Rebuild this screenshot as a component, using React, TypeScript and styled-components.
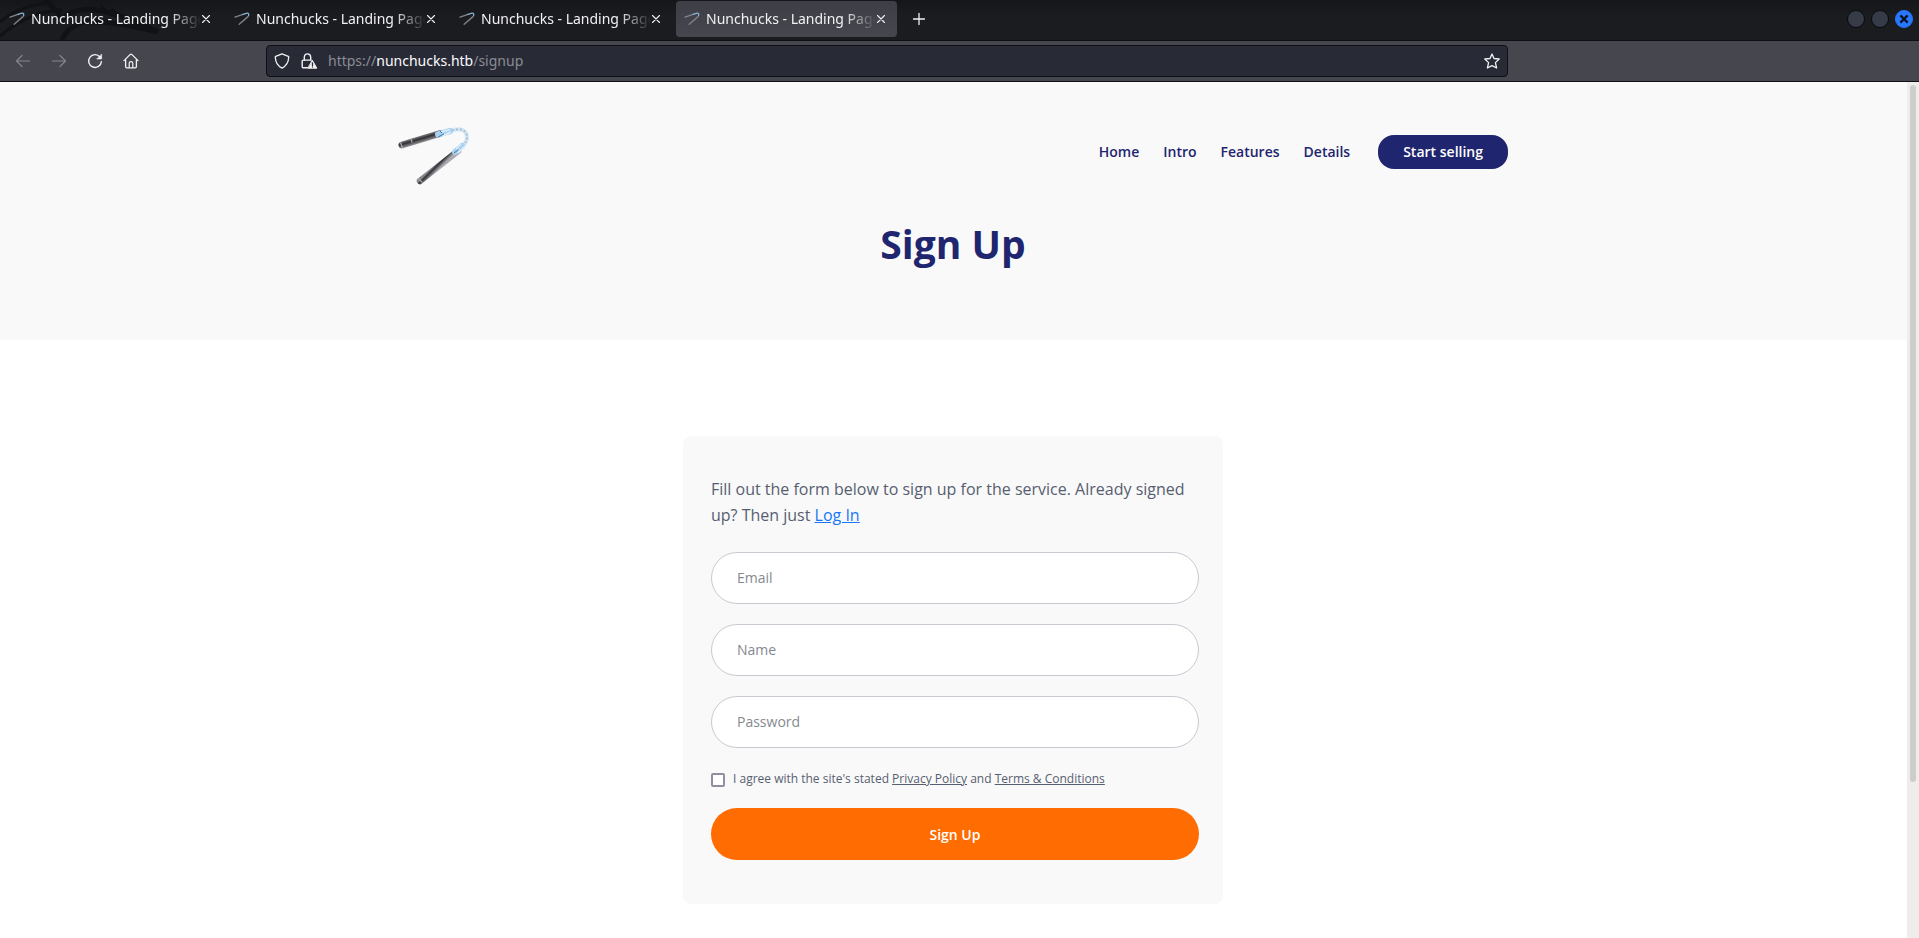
import React from "react";
import styled, { createGlobalStyle, css } from "styled-components";

const GlobalStyle = createGlobalStyle`
  *, *::before, *::after { box-sizing: border-box; }
  body { margin: 0; background: #fff; }
  button, input { font: inherit; }
`;

const openSans = `"Open Sans", "Noto Sans", sans-serif`;
const navy = "#1f256e";
const slate = "#575e70";

const BrowserWindow = styled.div`
  display: flex;
  flex-direction: column;
  min-height: 100vh;
`;

/* Browser chrome */

const TabBar = styled.div`
  position: relative;
  display: flex;
  align-items: flex-start;
  height: 41px;
  padding: 1px 6px 0 1px;
  border-bottom: 1px solid #0e0f13;
  background: linear-gradient(#15161a, #1b1c20 16px);
  font-family: "Noto Sans", sans-serif;
`;

const Watermark = styled.svg`
  position: absolute;
  left: 0;
  top: 0;
`;

const Tab = styled.div<{ $active?: boolean }>`
  position: relative;
  display: flex;
  align-items: center;
  width: 221px;
  height: 36px;
  margin-right: 4px;
  padding: 0 11px 0 8px;
  border-radius: 4px;
  color: #f1f1f3;
  ${(p) =>
    p.$active &&
    css`
      background: linear-gradient(#3e3e46, #46464f);
    `}
`;

const TabTitle = styled.span`
  flex: 1;
  margin-left: 6px;
  overflow: hidden;
  white-space: nowrap;
  font-size: 14px;
  line-height: 24px;
  mask-image: linear-gradient(to left, transparent, #000 32px);
`;

const IconButton = styled.button<{ $dim?: boolean }>`
  display: flex;
  align-items: center;
  justify-content: center;
  flex: none;
  padding: 0;
  border: 0;
  background: none;
  color: ${(p) => (p.$dim ? "#85858b" : "#f1f1f3")};
`;

const NewTab = styled(IconButton)`
  width: 36px;
  height: 36px;
`;

const WindowControls = styled.div`
  display: flex;
  gap: 6px;
  margin: 9px 0 0 auto;
`;

const WindowButton = styled.button<{ $close?: boolean }>`
  display: flex;
  align-items: center;
  justify-content: center;
  width: 18px;
  height: 18px;
  padding: 0;
  border: 1px solid ${(p) => (p.$close ? "#2777ff" : "#08090c")};
  border-radius: 50%;
  background: ${(p) => (p.$close ? "#2777ff" : "#363b48")};
`;

const Toolbar = styled.div`
  display: grid;
  grid-template-columns: 266px 1fr 411px;
  align-items: center;
  height: 41px;
  border-bottom: 1px solid #0f1014;
  background: #46464f;
`;

const ToolbarButtons = styled.div`
  display: flex;
  gap: 16px;
  padding-left: 13px;
`;

const ToolbarButton = styled(IconButton)`
  width: 20px;
  height: 20px;
`;

const AddressBar = styled.div`
  display: flex;
  align-items: center;
  height: 32px;
  padding: 0 7px;
  border: 1px solid #0e0f14;
  border-radius: 4px;
  background: #282a36;
  color: #f1f1f3;
  font: 14px/24px "Noto Sans", sans-serif;
`;

const Shield = styled(IconButton)`
  margin-right: 11px;
`;

const Address = styled.span`
  flex: 1;
  margin-left: 10px;
  color: #8b8c93;
`;

const Host = styled.span`
  color: #fbfbfe;
`;

/* Page */

const Viewport = styled.div`
  display: grid;
  grid-template-columns: 1fr 12px;
  flex: 1;
`;

const ScrollTrack = styled.div`
  padding: 3px;
  background: #eeedec;
`;

const ScrollThumb = styled.div`
  height: 82%;
  border-radius: 3px;
  background: #cdcdcd;
`;

const Page = styled.div`
  font-family: ${openSans};
`;

const Header = styled.header`
  height: 258px;
  padding-right: 1px;
  background: #f9f9f9;
`;

const Container = styled.div`
  display: flex;
  align-items: center;
  justify-content: space-between;
  max-width: 1140px;
  margin: 0 auto;
  padding: 37px 15px 0;
`;

const Nav = styled.nav`
  display: flex;
  align-items: center;
  gap: 24px;
  font-size: 14px;
  font-weight: 600;
  line-height: 20px;
`;

const NavLink = styled.a`
  color: ${navy};
  text-decoration: none;
`;

const NavButton = styled(NavLink)`
  margin-left: 4px;
  padding: 7px 25px;
  border-radius: 16px;
  background: ${navy};
  color: #fff;
`;

const Title = styled.h1`
  margin: 31px 0 0;
  color: ${navy};
  font-size: 39px;
  font-weight: 700;
  line-height: 56px;
  text-align: center;
`;

const Main = styled.main`
  padding: 96px 1px 32px 0;
`;

const Card = styled.form`
  max-width: 540px;
  margin: 0 auto;
  padding: 40px 24px 44px 28px;
  border-radius: 8px;
  background: #f9f9f9;
`;

const Intro = styled.p`
  margin: 0 0 24px;
  color: ${slate};
  font-size: 16px;
  line-height: 26px;
`;

const LoginLink = styled.a`
  color: #1877f9;
`;

const Field = styled.input`
  display: block;
  width: 100%;
  height: 52px;
  margin-bottom: 20px;
  padding: 0 25px 2px;
  border: 1px solid #c8cad1;
  border-radius: 26px;
  background: #fff;
  font-size: 14px;
  color: ${slate};
  &::placeholder {
    color: #85898f;
    opacity: 1;
  }
`;

const Agreement = styled.label`
  display: flex;
  align-items: center;
  gap: 8px;
  margin-bottom: 18px;
  color: ${slate};
  font-size: 12px;
  line-height: 22px;
`;

const Checkbox = styled.input`
  appearance: none;
  flex: none;
  width: 14px;
  height: 14px;
  margin: 2px 0 0;
  border: 2px solid #8f8f9d;
  border-radius: 2px;
  background: #fff;
`;

const PolicyLink = styled.a`
  color: inherit;
`;

const Submit = styled.button`
  display: block;
  width: 100%;
  height: 52px;
  border: 0;
  border-radius: 26px;
  background: #ff6c02;
  color: #fff;
  font-size: 14px;
  font-weight: 600;
`;

const stroke = {
  fill: "none",
  stroke: "currentColor",
  strokeLinecap: "round" as const,
  strokeLinejoin: "round" as const,
};

const Favicon = () => (
  <svg width="16" height="16" viewBox="0 0 16 16" fill="none" strokeLinecap="round">
    <path d="M1 6.2 9 3.4" stroke="#82858b" strokeWidth="1.3" />
    <path d="M9 3.4 13 2.2Q15.2 2 14.6 4.6" stroke="#86b4d4" strokeWidth="1.3" />
    <path d="M14 5.6 5.2 13.2" stroke="#7b7e85" strokeWidth="1.5" />
  </svg>
);

const Close = () => (
  <svg width="10" height="10" viewBox="0 0 10 10" {...stroke}>
    <path d="M1.5 1.5 8.5 8.5M8.5 1.5 1.5 8.5" strokeWidth="1.1" />
  </svg>
);

const Logo = () => (
  <svg width="72" height="66" viewBox="0 -6 72 66" fill="none" role="img" aria-label="Nunchucks">
    <defs>
      <linearGradient id="upper" x1="20" y1="8" x2="23" y2="18" gradientUnits="userSpaceOnUse">
        <stop offset="0" stopColor="#c3c3c6" />
        <stop offset="0.35" stopColor="#77767a" />
        <stop offset="0.6" stopColor="#302f33" />
        <stop offset="1" stopColor="#9c9ca1" />
      </linearGradient>
      <linearGradient id="lower" x1="35" y1="36" x2="42" y2="43" gradientUnits="userSpaceOnUse">
        <stop offset="0" stopColor="#5b5b60" />
        <stop offset="0.4" stopColor="#8f8f94" />
        <stop offset="0.6" stopColor="#2f2e33" />
        <stop offset="1" stopColor="#aaaab0" />
      </linearGradient>
    </defs>
    <path d="M54 5.5Q64 2 68 8Q71 14 65 21" stroke="#d4e6f3" strokeWidth="4" />
    <path d="M54 5.5Q64 2 68 8Q71 14 65 21" stroke="#a9c3d6" strokeWidth="2" strokeDasharray="2 2" />
    <path d="M4 20 42 8.5" stroke="url(#upper)" strokeWidth="7" strokeLinecap="round" />
    <path d="M40 9.5 52 6" stroke="#a9d0ee" strokeWidth="6" strokeLinecap="round" />
    <path d="M43 7 52 4.5M44 11 53 7" stroke="#e0f1fc" strokeWidth="1.5" />
    <path d="M40 12 46 9M42 6 44 8" stroke="#3d78a8" strokeWidth="1" />
    <path d="M2.5 17.5 4.5 23M13 13.5 14 17.5" stroke="#a9a9ad" strokeWidth="1.2" />
    <path d="M22 56 60 26" stroke="url(#lower)" strokeWidth="6.5" strokeLinecap="round" />
    <path d="M57 27 64 21" stroke="#a9d0ee" strokeWidth="6" strokeLinecap="round" />
    <path d="M58 24 63 19M60 28 67 21" stroke="#e0f1fc" strokeWidth="1.5" />
    <path d="M56 28 60 25" stroke="#3d78a8" strokeWidth="1" />
    <path d="M20 53.5 24.5 57.5" stroke="#a9a9ad" strokeWidth="1.2" />
  </svg>
);

const tabs = [1, 2, 3, 4];

export default function App() {
  return (
    <BrowserWindow>
      <GlobalStyle />
      <TabBar>
        <Watermark width="170" height="40" viewBox="0 0 170 40" fill="none" stroke="#111216">
          <path d="M0 22Q22 4 52 3M0 36Q28 12 62 10" strokeWidth="3" />
          <path d="M44 0Q56 8 62 20Q70 10 88 9Q120 12 158 32Q110 20 84 22Q66 28 62 40" strokeWidth="5" />
          <path d="M88 10 104 12 102 7 112 14 112 9 122 18" strokeWidth="2" fill="#111216" />
        </Watermark>
        {tabs.map((id) => (
          <Tab key={id} $active={id === 4}>
            <Favicon />
            <TabTitle>Nunchucks - Landing Page</TabTitle>
            <IconButton aria-label="Close tab">
              <Close />
            </IconButton>
          </Tab>
        ))}
        <NewTab aria-label="New tab">
          <svg width="14" height="14" viewBox="0 0 14 14" {...stroke}>
            <path d="M7 1.5V12.5M1.5 7H12.5" strokeWidth="1.3" />
          </svg>
        </NewTab>
        <WindowControls>
          <WindowButton aria-label="Minimize" />
          <WindowButton aria-label="Maximize" />
          <WindowButton $close aria-label="Close window">
            <svg width="10" height="10" viewBox="0 0 10 10" fill="none" stroke="#0b1220" strokeWidth="2.2">
              <path d="M1.4 1.4 8.6 8.6M8.6 1.4 1.4 8.6" />
            </svg>
          </WindowButton>
        </WindowControls>
      </TabBar>

      <Toolbar>
        <ToolbarButtons>
          <ToolbarButton $dim aria-label="Back">
            <svg width="16" height="16" viewBox="0 0 16 16" {...stroke}>
              <path d="M14.5 8H1.5M7 2.5 1.5 8 7 13.5" strokeWidth="1.2" />
            </svg>
          </ToolbarButton>
          <ToolbarButton $dim aria-label="Forward">
            <svg width="16" height="16" viewBox="0 0 16 16" {...stroke}>
              <path d="M1.5 8H14.5M9 2.5 14.5 8 9 13.5" strokeWidth="1.2" />
            </svg>
          </ToolbarButton>
          <ToolbarButton aria-label="Reload">
            <svg width="16" height="16" viewBox="0 0 16 16" {...stroke}>
              <path d="M13 4A6.4 6.4 0 1 0 14.4 8.6" strokeWidth="1.4" />
              <path d="M14.6 1.4V6H10Z" fill="currentColor" strokeWidth=".6" />
            </svg>
          </ToolbarButton>
          <ToolbarButton aria-label="Home">
            <svg width="16" height="16" viewBox="0 0 16 16" {...stroke}>
              <path d="M1 7.6 7.3 1.4Q8 .8 8.7 1.4L15 7.6M2.6 6.6V13.6Q2.6 14.8 3.8 14.8H12.2Q13.4 14.8 13.4 13.6V6.6" strokeWidth="1.3" />
              <path d="M6.2 14.5V10.2Q6.2 8.6 8 8.6T9.8 10.2V14.5" strokeWidth="1.2" />
            </svg>
          </ToolbarButton>
        </ToolbarButtons>
        <AddressBar>
          <Shield aria-label="Tracking protection">
            <svg width="16" height="16" viewBox="0 0 16 16" {...stroke}>
              <path d="M8 .9 14.3 3.3Q14.8 3.5 14.7 4.2Q14.4 11.8 8 15.1Q1.6 11.8 1.3 4.2Q1.2 3.5 1.7 3.3Z" strokeWidth="1.3" />
            </svg>
          </Shield>
          <IconButton aria-label="Connection is not secure">
            <svg width="17" height="16" viewBox="0 0 17 16" {...stroke}>
              <path d="M3.3 7V4.2Q3.5.9 6.5.9T9.7 4.2V7" strokeWidth="1.4" />
              <path d="M6.5 14.8H2.4Q1.2 14.8 1.2 13.6V8.3Q1.2 7.1 2.4 7.1H10" strokeWidth="1.4" />
              <path d="M11.5 7.5 15.8 15.2H7.2Z" fill="currentColor" strokeWidth="1" />
              <path d="M11.5 10V12.4M11.5 13.9V14" stroke="#282a36" strokeWidth="1.3" />
            </svg>
          </IconButton>
          <Address>
            https://<Host>nunchucks.htb</Host>/signup
          </Address>
          <IconButton aria-label="Bookmark this page">
            <svg width="16" height="16" viewBox="0 0 16 16" {...stroke}>
              <path d="M8 1 10 5.5 15.2 6 11.4 9.6 12.6 15 8 12.6 3.4 15 4.6 9.6.8 6 6 5.5Z" strokeWidth="1.3" />
            </svg>
          </IconButton>
        </AddressBar>
      </Toolbar>

      <Viewport>
        <Page>
          <Header>
            <Container>
              <Logo />
              <Nav>
                <NavLink href="#home">Home</NavLink>
                <NavLink href="#intro">Intro</NavLink>
                <NavLink href="#features">Features</NavLink>
                <NavLink href="#details">Details</NavLink>
                <NavButton href="#signup">Start selling</NavButton>
              </Nav>
            </Container>
            <Title>Sign Up</Title>
          </Header>
          <Main>
            <Card>
              <Intro>
                Fill out the form below to sign up for the service. Already signed up? Then just{" "}
                <LoginLink href="#login">Log In</LoginLink>
              </Intro>
              <Field type="email" placeholder="Email" aria-label="Email" />
              <Field type="text" placeholder="Name" aria-label="Name" />
              <Field type="password" placeholder="Password" aria-label="Password" />
              <Agreement>
                <Checkbox type="checkbox" />
                <span>
                  I agree with the site's stated <PolicyLink href="#privacy">Privacy Policy</PolicyLink> and{" "}
                  <PolicyLink href="#terms">Terms &amp; Conditions</PolicyLink>
                </span>
              </Agreement>
              <Submit type="button">Sign Up</Submit>
            </Card>
          </Main>
        </Page>
        <ScrollTrack>
          <ScrollThumb />
        </ScrollTrack>
      </Viewport>
    </BrowserWindow>
  );
}
